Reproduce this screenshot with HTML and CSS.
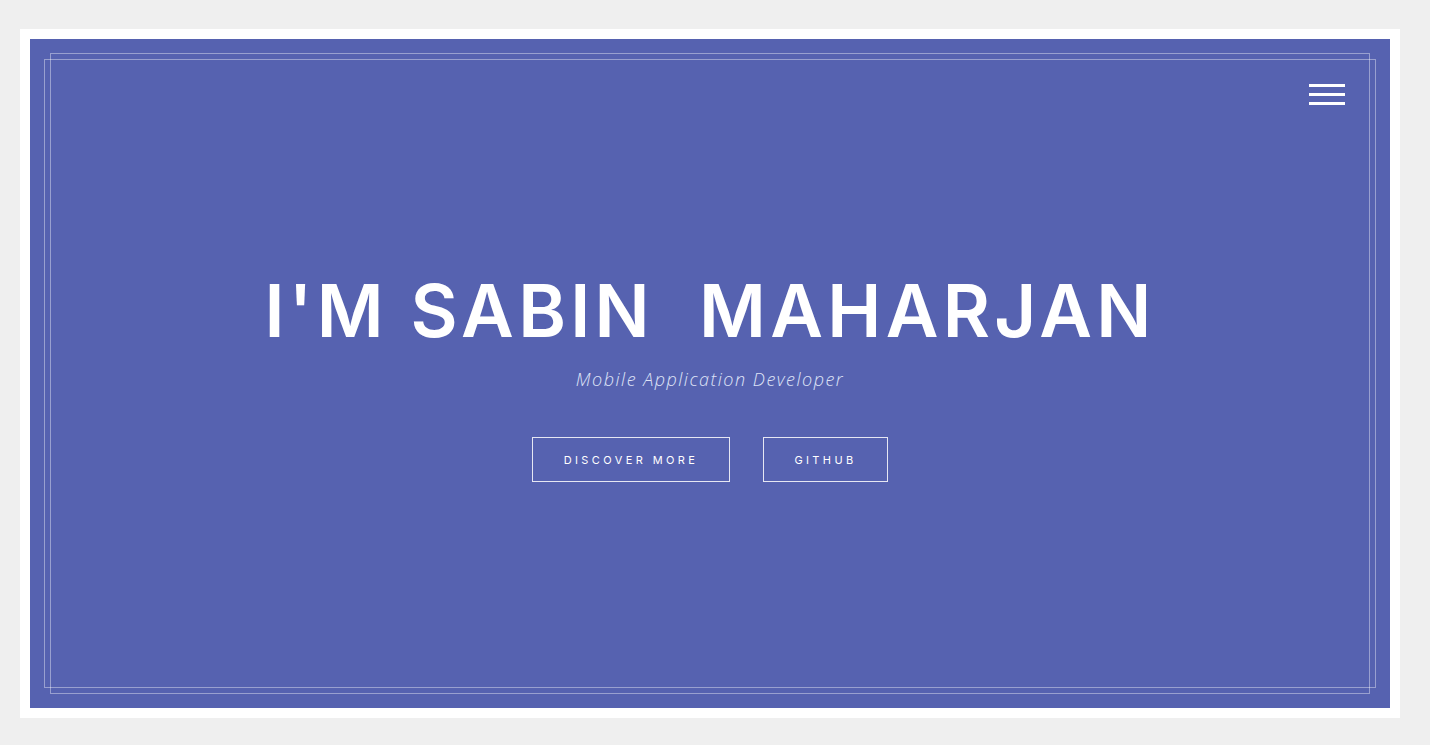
FILE: index.html
```html
<!DOCTYPE html>
<html>
<head>
<meta charset="utf-8">
<link rel="stylesheet" href="styles.css">
</head>
<body>
<div class="frame">
  <section class="hero">
    <button class="menu" aria-label="Menu"><span></span><span></span><span></span></button>
    <h1 class="title">I'M SABIN&nbsp; MAHARJAN</h1>
    <p class="subtitle">Mobile Application Developer</p>
    <div class="actions">
      <a class="btn btn-discover" href="#">DISCOVER MORE</a>
      <a class="btn btn-github" href="#">GITHUB</a>
    </div>
  </section>
</div>
</body>
</html>
```
FILE: styles.css
```css
html, body {
  margin: 0;
  padding: 0;
}
body {
  background: #efefef;
  padding: 29px 30px 27px 20px;
  font-family: "Inter", "Open Sans", sans-serif;
}
.frame {
  background: #ffffff;
  padding: 10px;
}
.hero {
  position: relative;
  height: 669px;
  background: #5662b0;
  display: flex;
  flex-direction: column;
  align-items: center;
  padding-top: 232px;
  box-sizing: border-box;
}
.hero::before,
.hero::after {
  content: "";
  position: absolute;
  border: 1px solid rgba(255, 255, 255, 0.4);
  pointer-events: none;
}
.hero::before {
  top: 14px;
  bottom: 14px;
  left: 20px;
  right: 20px;
}
.hero::after {
  top: 20px;
  bottom: 20px;
  left: 14px;
  right: 14px;
}
.menu {
  position: absolute;
  top: 45px;
  right: 45px;
  width: 36px;
  height: 21px;
  padding: 0;
  border: 0;
  background: none;
  display: flex;
  flex-direction: column;
  justify-content: space-between;
  z-index: 2;
}
.menu span {
  display: block;
  height: 3px;
  background: #ffffff;
}
.title {
  margin: 0;
  color: #ffffff;
  font-size: 72.5px;
  line-height: 80px;
  font-weight: 600;
  letter-spacing: 4.3px;
  white-space: nowrap;
}
.subtitle {
  margin: 16px 0 0;
  color: #dfe3f7;
  font-family: "Open Sans", sans-serif;
  font-style: italic;
  font-weight: 300;
  font-size: 18px;
  line-height: 24px;
  letter-spacing: 1.5px;
}
.actions {
  display: flex;
  gap: 33px;
  margin-top: 46px;
}
.btn {
  display: flex;
  align-items: center;
  justify-content: center;
  height: 45px;
  box-sizing: border-box;
  border: 1px solid rgba(255, 255, 255, 0.85);
  color: #ffffff;
  text-decoration: none;
  font-family: "Inter", sans-serif;
  font-size: 11px;
  font-weight: 400;
  letter-spacing: 3.4px;
}
.btn-discover {
  width: 198px;
}
.btn-github {
  width: 125px;
}
```
